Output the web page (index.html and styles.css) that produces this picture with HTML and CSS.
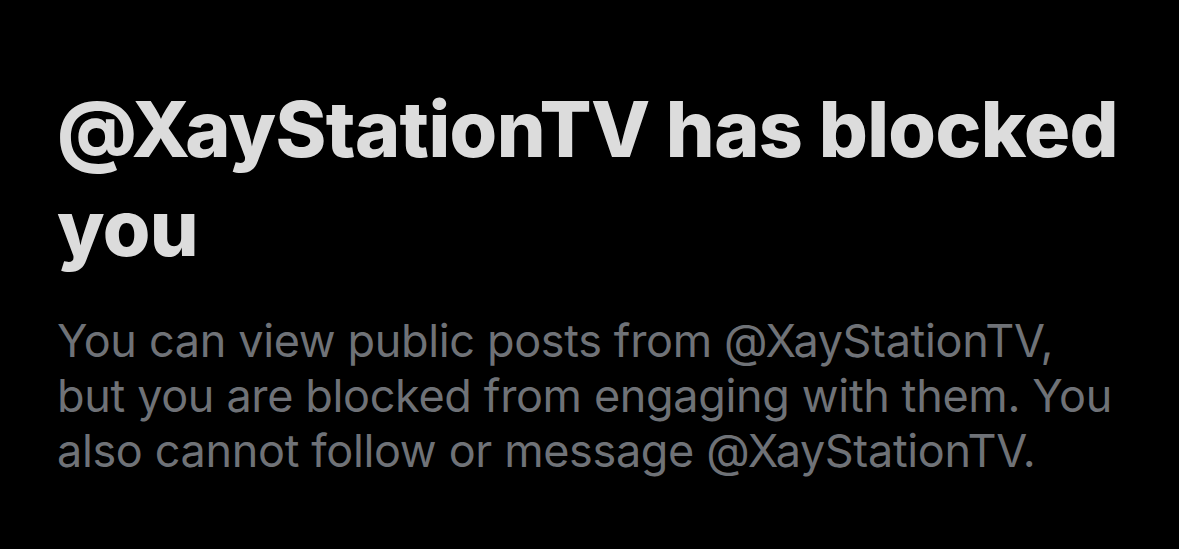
FILE: index.html
```html
<!DOCTYPE html>
<html lang="en">
  <head>
    <meta charset="utf-8">
    <title>Blocked</title>
    <link rel="stylesheet" href="styles.css">
  </head>
  <body>
    <div class="notice">
      <h1 class="notice-title">@XayStationTV has blocked you</h1>
      <p class="notice-text">You can view public posts from @XayStationTV, but you are blocked from engaging with them. You also cannot follow or message @XayStationTV.</p>
    </div>
  </body>
</html>
```
FILE: styles.css
```css
html {
  height: 100%;
}
body {
  margin: 0;
  padding: 0;
  background: #000000;
  height: 100%;
  font-family: Inter, "Liberation Sans", sans-serif;
}
.notice {
  padding: 80px 55px 0 57px;
}
.notice-title {
  margin: 0;
  color: #dcdcdc;
  font-size: 77px;
  font-weight: 800;
  line-height: 99px;
  letter-spacing: -0.6px;
}
.notice-text {
  margin: 35px 0 0;
  color: #6f7277;
  font-size: 45px;
  font-weight: 400;
  line-height: 55px;
  letter-spacing: -0.35px;
}
```
